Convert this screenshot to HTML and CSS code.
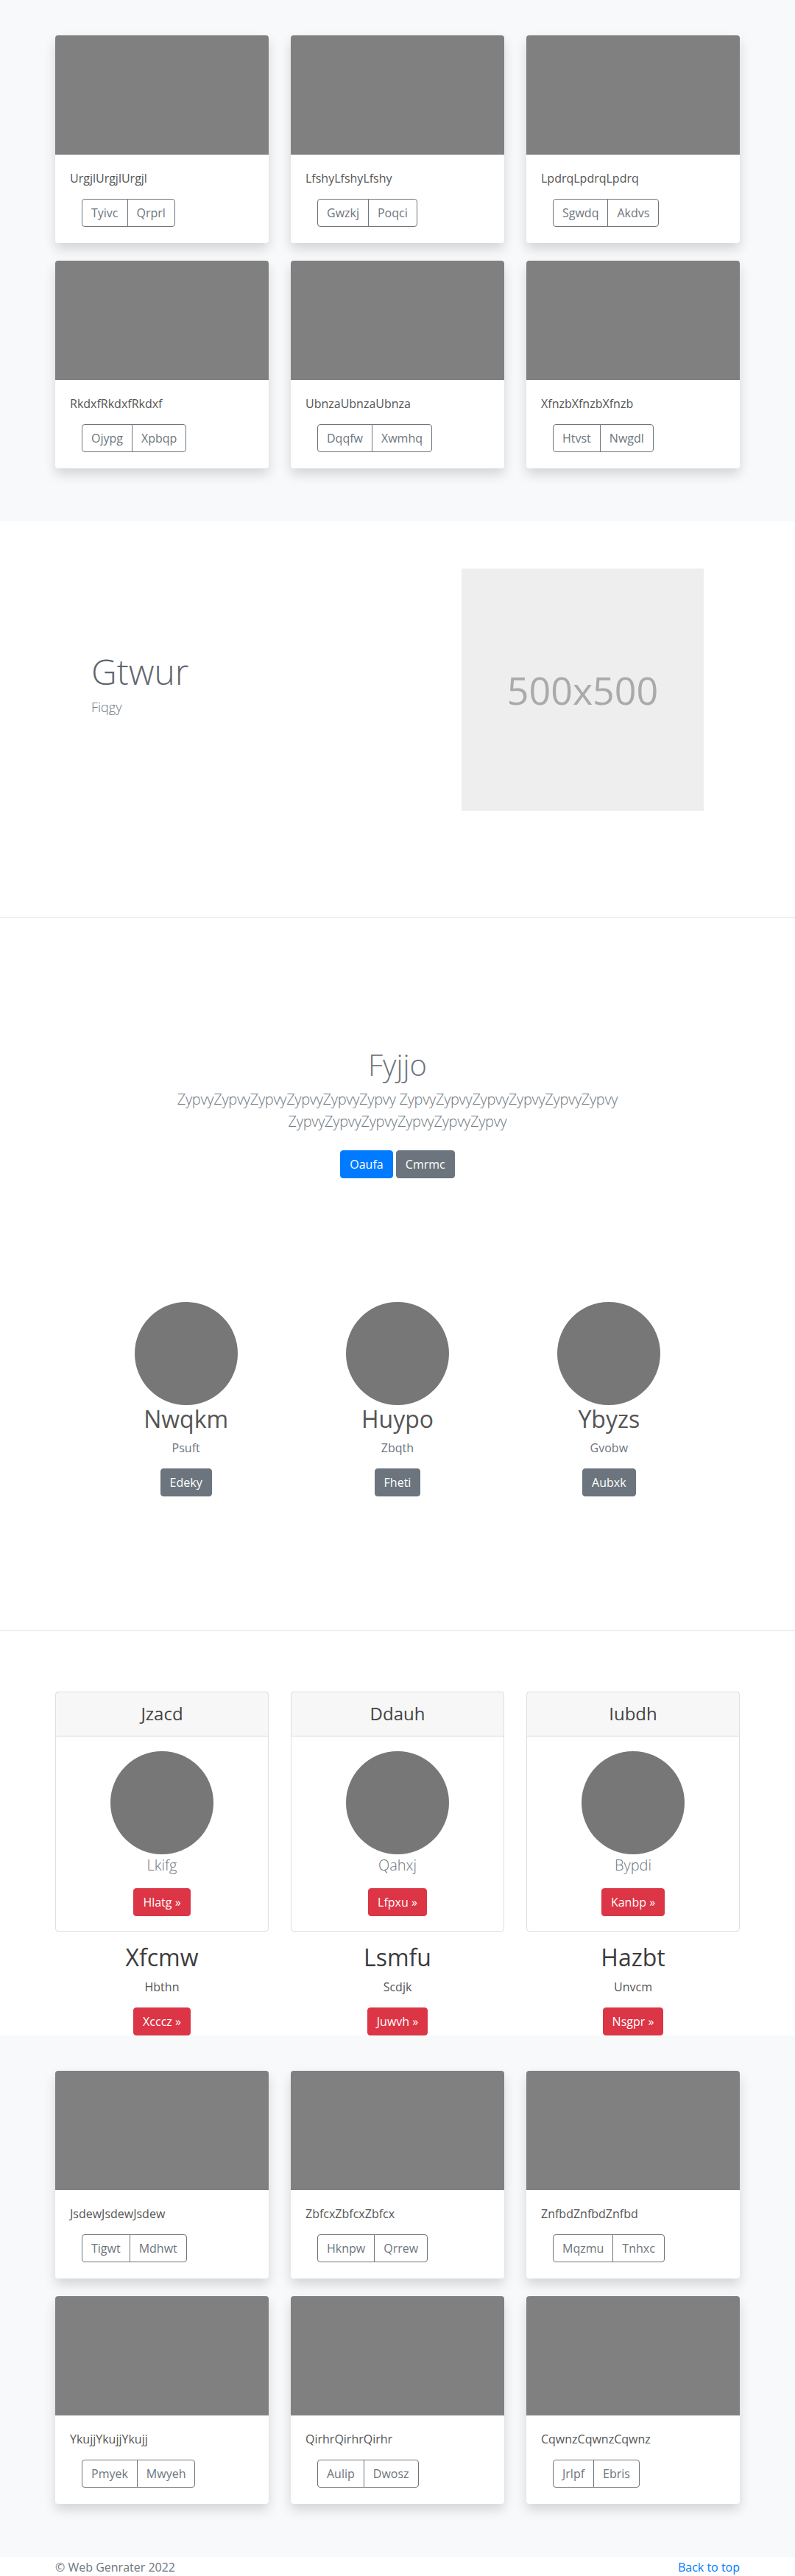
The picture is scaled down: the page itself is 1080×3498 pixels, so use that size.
FILE: index.html
```html
<!DOCTYPE html>
<html lang="en">
<head>
<meta charset="utf-8">
<title>Web Genrater</title>
<link rel="stylesheet" href="styles.css">
</head>
<body>

<section class="album">
  <div class="container">
    <div class="album-grid">
      <div class="pcard"><div class="pcard-img"></div><div class="pcard-body"><p class="pcard-text">UrgjlUrgjlUrgjl</p><div class="btn-group"><span class="btn-outline">Tyivc</span><span class="btn-outline">Qrprl</span></div></div></div>
      <div class="pcard"><div class="pcard-img"></div><div class="pcard-body"><p class="pcard-text">LfshyLfshyLfshy</p><div class="btn-group"><span class="btn-outline">Gwzkj</span><span class="btn-outline">Poqci</span></div></div></div>
      <div class="pcard"><div class="pcard-img"></div><div class="pcard-body"><p class="pcard-text">LpdrqLpdrqLpdrq</p><div class="btn-group"><span class="btn-outline">Sgwdq</span><span class="btn-outline">Akdvs</span></div></div></div>
      <div class="pcard"><div class="pcard-img"></div><div class="pcard-body"><p class="pcard-text">RkdxfRkdxfRkdxf</p><div class="btn-group"><span class="btn-outline">Ojypg</span><span class="btn-outline">Xpbqp</span></div></div></div>
      <div class="pcard"><div class="pcard-img"></div><div class="pcard-body"><p class="pcard-text">UbnzaUbnzaUbnza</p><div class="btn-group"><span class="btn-outline">Dqqfw</span><span class="btn-outline">Xwmhq</span></div></div></div>
      <div class="pcard"><div class="pcard-img"></div><div class="pcard-body"><p class="pcard-text">XfnzbXfnzbXfnzb</p><div class="btn-group"><span class="btn-outline">Htvst</span><span class="btn-outline">Nwgdl</span></div></div></div>
    </div>
  </div>
</section>

<section class="hero">
  <div class="container hero-row">
    <div class="hero-text">
      <h1 class="hero-title">Gtwur</h1>
      <p class="hero-sub">Fiqgy</p>
    </div>
    <div class="hero-media">
      <div class="placeholder">500x500</div>
    </div>
  </div>
</section>

<section class="jumbo">
  <div class="container">
    <h1 class="jumbo-title">Fyjjo</h1>
    <p class="jumbo-lead">ZypvyZypvyZypvyZypvyZypvyZypvy ZypvyZypvyZypvyZypvyZypvyZypvy ZypvyZypvyZypvyZypvyZypvyZypvy</p>
    <div class="jumbo-actions">
      <a class="btn btn-primary" href="#">Oaufa</a>
      <a class="btn btn-secondary" href="#">Cmrmc</a>
    </div>
    <div class="people">
      <div class="person">
        <div class="avatar"></div>
        <h2 class="person-name">Nwqkm</h2>
        <p class="person-role">Psuft</p>
        <a class="btn btn-secondary" href="#">Edeky</a>
      </div>
      <div class="person">
        <div class="avatar"></div>
        <h2 class="person-name">Huypo</h2>
        <p class="person-role">Zbqth</p>
        <a class="btn btn-secondary" href="#">Fheti</a>
      </div>
      <div class="person">
        <div class="avatar"></div>
        <h2 class="person-name">Ybyzs</h2>
        <p class="person-role">Gvobw</p>
        <a class="btn btn-secondary" href="#">Aubxk</a>
      </div>
    </div>
  </div>
</section>

<section class="deck-section">
  <div class="container">
    <div class="deck">
      <div class="hcard">
        <div class="hcard-header"><h4 class="hcard-title">Jzacd</h4></div>
        <div class="hcard-body">
          <div class="avatar"></div>
          <p class="hcard-text">Lkifg</p>
          <a class="btn btn-danger" href="#">Hlatg »</a>
        </div>
      </div>
      <div class="hcard">
        <div class="hcard-header"><h4 class="hcard-title">Ddauh</h4></div>
        <div class="hcard-body">
          <div class="avatar"></div>
          <p class="hcard-text">Qahxj</p>
          <a class="btn btn-danger" href="#">Lfpxu »</a>
        </div>
      </div>
      <div class="hcard">
        <div class="hcard-header"><h4 class="hcard-title">Iubdh</h4></div>
        <div class="hcard-body">
          <div class="avatar"></div>
          <p class="hcard-text">Bypdi</p>
          <a class="btn btn-danger" href="#">Kanbp »</a>
        </div>
      </div>
    </div>
    <div class="features">
      <div class="feature">
        <h2 class="feature-title">Xfcmw</h2>
        <p class="feature-text">Hbthn</p>
        <a class="btn btn-danger" href="#">Xcccz »</a>
      </div>
      <div class="feature">
        <h2 class="feature-title">Lsmfu</h2>
        <p class="feature-text">Scdjk</p>
        <a class="btn btn-danger" href="#">Juwvh »</a>
      </div>
      <div class="feature">
        <h2 class="feature-title">Hazbt</h2>
        <p class="feature-text">Unvcm</p>
        <a class="btn btn-danger" href="#">Nsgpr »</a>
      </div>
    </div>
  </div>
</section>

<section class="album">
  <div class="container">
    <div class="album-grid">
      <div class="pcard"><div class="pcard-img"></div><div class="pcard-body"><p class="pcard-text">JsdewJsdewJsdew</p><div class="btn-group"><span class="btn-outline">Tigwt</span><span class="btn-outline">Mdhwt</span></div></div></div>
      <div class="pcard"><div class="pcard-img"></div><div class="pcard-body"><p class="pcard-text">ZbfcxZbfcxZbfcx</p><div class="btn-group"><span class="btn-outline">Hknpw</span><span class="btn-outline">Qrrew</span></div></div></div>
      <div class="pcard"><div class="pcard-img"></div><div class="pcard-body"><p class="pcard-text">ZnfbdZnfbdZnfbd</p><div class="btn-group"><span class="btn-outline">Mqzmu</span><span class="btn-outline">Tnhxc</span></div></div></div>
      <div class="pcard"><div class="pcard-img"></div><div class="pcard-body"><p class="pcard-text">YkujjYkujjYkujj</p><div class="btn-group"><span class="btn-outline">Pmyek</span><span class="btn-outline">Mwyeh</span></div></div></div>
      <div class="pcard"><div class="pcard-img"></div><div class="pcard-body"><p class="pcard-text">QirhrQirhrQirhr</p><div class="btn-group"><span class="btn-outline">Aulip</span><span class="btn-outline">Dwosz</span></div></div></div>
      <div class="pcard"><div class="pcard-img"></div><div class="pcard-body"><p class="pcard-text">CqwnzCqwnzCqwnz</p><div class="btn-group"><span class="btn-outline">Jrlpf</span><span class="btn-outline">Ebris</span></div></div></div>
    </div>
  </div>
</section>

<footer class="footer">
  <div class="container footer-row">
    <p class="footer-copy">© Web Genrater 2022</p>
    <a class="footer-link" href="#">Back to top</a>
  </div>
</footer>

</body>
</html>
```

FILE: styles.css
```css
* { box-sizing: border-box; }

body {
  margin: 0;
  font-family: "Segoe UI", "Open Sans", "Noto Sans", sans-serif;
  font-size: 16px;
  line-height: 1.5;
  color: #212529;
  background: #fff;
}

.container {
  width: 930px;
  margin: 0 auto;
}

/* buttons */
.btn {
  display: inline-block;
  font-size: 16px;
  line-height: 24px;
  padding: 6px 12px;
  border: 1px solid transparent;
  border-radius: 4px;
  text-decoration: none;
  color: #fff;
}
.btn-primary { background: #007bff; border-color: #007bff; }
.btn-secondary { background: #6c757d; border-color: #6c757d; }
.btn-danger { background: #dc3545; border-color: #dc3545; }

/* album sections */
.album {
  background: #f8f9fa;
  padding: 48px 0 72px;
}
.album-grid {
  display: grid;
  grid-template-columns: repeat(3, 290px);
  column-gap: 30px;
  row-gap: 24px;
}
.pcard {
  background: #fff;
  border-radius: 4px;
  overflow: hidden;
  box-shadow: 0 8px 16px rgba(0, 0, 0, 0.15);
}
.pcard-img {
  height: 162px;
  background: #808080;
}
.pcard-body {
  padding: 20px 20px 22px;
}
.pcard-text {
  margin: 0 0 16px;
  color: #555;
}
.btn-group {
  display: inline-flex;
  margin-left: 16px;
}
.btn-outline {
  display: inline-block;
  font-size: 16px;
  line-height: 24px;
  padding: 6px 12px;
  border: 1px solid #6c757d;
  color: #6c757d;
}
.btn-outline:first-child { border-radius: 4px 0 0 4px; }
.btn-outline + .btn-outline { margin-left: -1px; border-radius: 0 4px 4px 0; }

/* hero */
.hero {
  padding: 64px 0 144px;
  border-bottom: 1px solid #e5e5e5;
}
.hero-row {
  display: flex;
  align-items: center;
}
.hero-text {
  width: 465px;
  padding-left: 49px;
  padding-bottom: 16px;
}
.hero-title {
  font-size: 48px;
  font-weight: 300;
  line-height: 1.2;
  margin: 0 0 6px;
  color: #5f6770;
}
.hero-sub {
  font-size: 18px;
  font-weight: 300;
  color: #6c757d;
  margin: 0;
}
.hero-media {
  padding-left: 87px;
}
.placeholder {
  width: 329px;
  height: 329px;
  background: #eee;
  color: #aaa;
  display: flex;
  align-items: center;
  justify-content: center;
  font-size: 52px;
}

/* jumbotron + people */
.jumbo {
  text-align: center;
  padding: 176px 0 182px;
  border-bottom: 1px solid #e5e5e5;
}
.jumbo-title {
  font-size: 40px;
  font-weight: 300;
  line-height: 1.2;
  margin: 0 0 8px;
  color: #6c757d;
}
.jumbo-lead {
  width: 640px;
  margin: 0 auto 16px;
  font-size: 20px;
  font-weight: 300;
  line-height: 30px;
  letter-spacing: -0.3px;
  color: #6c757d;
}
.jumbo-actions .btn {
  margin: 8px 0;
}
.people {
  width: 862px;
  margin: 160px auto 0;
  display: grid;
  grid-template-columns: repeat(3, 1fr);
}
.person {
  display: flex;
  flex-direction: column;
  align-items: center;
}
.avatar {
  width: 140px;
  height: 140px;
  border-radius: 50%;
  background: #777;
}
.person-name {
  font-size: 32px;
  font-weight: 400;
  line-height: 1.2;
  margin: 0 0 8px;
  color: #555;
}
.person-role {
  margin: 0 0 16px;
  color: #6c757d;
}

/* card deck section */
.deck-section {
  padding-top: 82px;
}
.deck {
  display: grid;
  grid-template-columns: repeat(3, 290px);
  column-gap: 30px;
  text-align: center;
}
.hcard {
  border: 1px solid rgba(0, 0, 0, 0.125);
  border-radius: 4px;
  margin-bottom: 16px;
}
.hcard-header {
  padding: 15px 20px;
  background: rgba(0, 0, 0, 0.03);
  border-bottom: 1px solid rgba(0, 0, 0, 0.125);
}
.hcard-title {
  margin: 0;
  font-size: 24px;
  font-weight: 400;
  line-height: 1.2;
  color: #444;
}
.hcard-body {
  padding: 20px;
  display: flex;
  flex-direction: column;
  align-items: center;
}
.hcard-text {
  margin: 0 0 16px;
  font-size: 20px;
  font-weight: 300;
  line-height: 30px;
  color: #6c757d;
}
.features {
  display: grid;
  grid-template-columns: repeat(3, 1fr);
  column-gap: 30px;
  text-align: center;
}
.feature-title {
  font-size: 32px;
  font-weight: 500;
  line-height: 1.2;
  margin: 0 0 8px;
  color: #3d3d3d;
}
.feature-text {
  margin: 0 0 16px;
  color: #555;
}

/* footer */
.footer {
  padding-top: 2px;
}
.footer-row {
  display: flex;
  justify-content: space-between;
}
.footer-copy {
  margin: 0;
  color: #6c757d;
}
.footer-link {
  color: #007bff;
  text-decoration: none;
}
```
